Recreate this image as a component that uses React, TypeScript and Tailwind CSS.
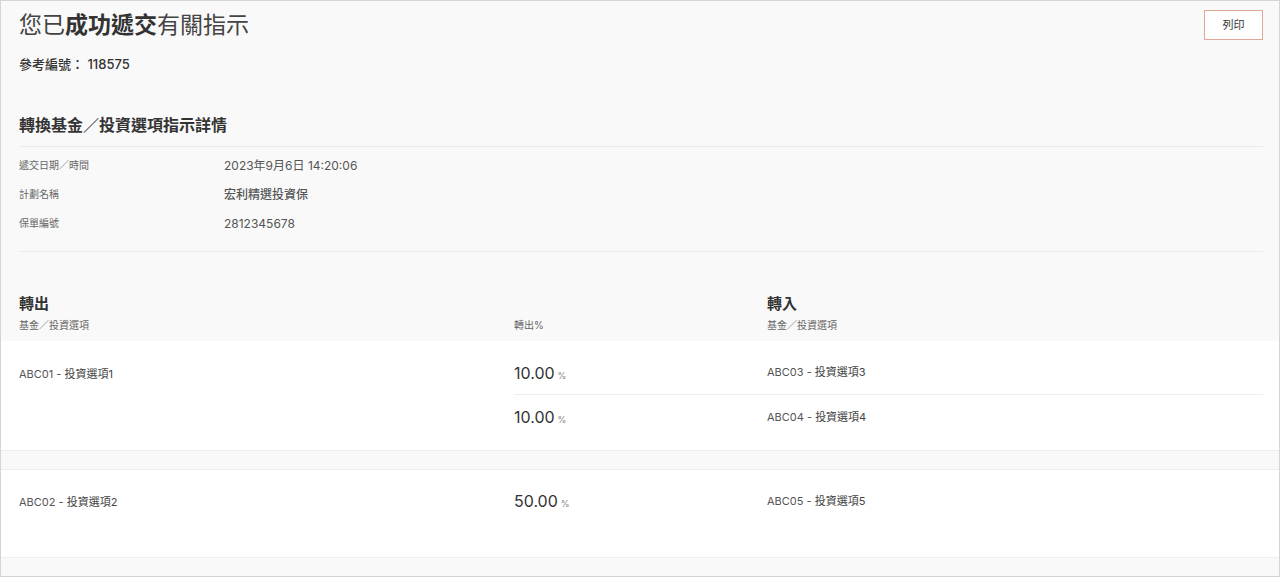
import React from "react";

const font = { fontFamily: 'Inter, "Noto Sans CJK TC", "Noto Sans", sans-serif' };

function Pct({ v }: { v: string }) {
  return (
    <span className="text-[#333]">
      <span className="text-[16px]">{v}</span>
      <span className="ml-[3px] text-[9px] text-[#888]">%</span>
    </span>
  );
}

function Fund({ code, name }: { code: string; name: string }) {
  return (
    <span className="text-[11px] text-[#444]">
      <span className="text-[#555]">{code} - </span>
      <span>{name}</span>
    </span>
  );
}

export default function App() {
  return (
    <div
      className="w-[1280px] h-[577px] border border-[#d4d4d4] bg-[#f9f9f9] overflow-hidden"
      style={font}
    >
      <div className="px-[18px] pr-[16px]">
        <div className="flex items-start justify-between pt-[8px]">
          <h1 className="h-[32px] leading-[32px] text-[23px] text-[#444]">
            您已<span className="font-bold text-[#333]">成功遞交</span>有關指示
          </h1>
          <button className="mt-[1px] w-[59px] h-[30px] border border-[#e1a89a] bg-white text-[11px] text-[#333]">
            列印
          </button>
        </div>
        <div className="mt-[13px] h-[20px] leading-[20px] text-[13px] font-medium text-[#333]">
          參考編號： 118575
        </div>
        <h2 className="mt-[39px] h-[24px] leading-[24px] text-[16px] font-bold text-[#333]">
          轉換基金／投資選項指示詳情
        </h2>
        <div className="mt-[9px] h-px bg-[#ebebeb]" />
        <div className="mt-[4px]">
          {[
            ["遞交日期／時間", "2023年9月6日 14:20:06", false],
            ["計劃名稱", "宏利精選投資保", true],
            ["保單編號", "2812345678", false],
          ].map(([l, v, b]) => (
            <div key={l as string} className="flex h-[29px] items-center">
              <div className="w-[205px] text-[10px] text-[#666]">{l}</div>
              <div className={`text-[12px] text-[#555] ${b ? "font-medium text-[#333]" : ""}`}>{v}</div>
            </div>
          ))}
        </div>
        <div className="mt-[13px] h-px bg-[#ebebeb]" />
        <div className="mt-[42px] mb-[9px] grid grid-cols-[495px_253px_1fr]">
          <div>
            <div className="h-[20px] leading-[20px] text-[15px] font-bold text-[#333]">轉出</div>
            <div className="mt-[4px] h-[14px] leading-[14px] text-[10px] text-[#666]">基金／投資選項</div>
          </div>
          <div className="flex flex-col justify-end">
            <div className="h-[14px] leading-[14px] text-[10px] text-[#666]">轉出%</div>
          </div>
          <div>
            <div className="h-[20px] leading-[20px] text-[15px] font-bold text-[#333]">轉入</div>
            <div className="mt-[4px] h-[14px] leading-[14px] text-[10px] text-[#666]">基金／投資選項</div>
          </div>
        </div>
      </div>

      <div className="bg-white border-b border-[#efefef] px-[18px] pr-[16px] pt-[10px] pb-[11px] grid grid-cols-[495px_1fr]">
        <div className="pt-[3px] h-[44px] flex items-center">
          <Fund code="ABC01" name="投資選項1" />
        </div>
        <div>
          <div className="grid grid-cols-[253px_1fr] h-[44px] items-center border-b border-[#eeeeee]">
            <Pct v="10.00" />
            <Fund code="ABC03" name="投資選項3" />
          </div>
          <div className="grid grid-cols-[253px_1fr] h-[44px] items-center">
            <Pct v="10.00" />
            <Fund code="ABC04" name="投資選項4" />
          </div>
        </div>
      </div>

      <div className="mt-[18px] bg-white border-y border-[#efefef] px-[18px] pr-[16px] pt-[9px] pb-[34px] grid grid-cols-[495px_1fr]">
        <div className="pt-[3px] h-[44px] flex items-center">
          <Fund code="ABC02" name="投資選項2" />
        </div>
        <div className="grid grid-cols-[253px_1fr] h-[44px] items-center">
          <Pct v="50.00" />
          <Fund code="ABC05" name="投資選項5" />
        </div>
      </div>
    </div>
  );
}
